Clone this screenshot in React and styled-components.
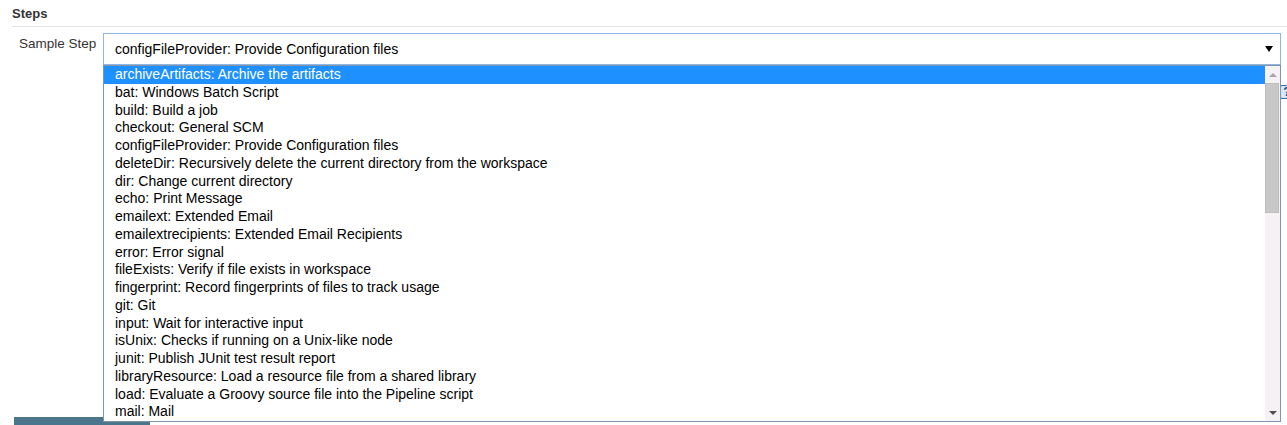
import styled, { createGlobalStyle } from "styled-components";

const GlobalStyle = createGlobalStyle`
  html, body {
    margin: 0;
    padding: 0;
    background: #fff;
    overflow: hidden;
  }
  body {
    font-family: "Liberation Sans", Arial, sans-serif;
    color: #333;
  }
`;

const STEPS = [
  "archiveArtifacts: Archive the artifacts",
  "bat: Windows Batch Script",
  "build: Build a job",
  "checkout: General SCM",
  "configFileProvider: Provide Configuration files",
  "deleteDir: Recursively delete the current directory from the workspace",
  "dir: Change current directory",
  "echo: Print Message",
  "emailext: Extended Email",
  "emailextrecipients: Extended Email Recipients",
  "error: Error signal",
  "fileExists: Verify if file exists in workspace",
  "fingerprint: Record fingerprints of files to track usage",
  "git: Git",
  "input: Wait for interactive input",
  "isUnix: Checks if running on a Unix-like node",
  "junit: Publish JUnit test result report",
  "libraryResource: Load a resource file from a shared library",
  "load: Evaluate a Groovy source file into the Pipeline script",
  "mail: Mail",
];

const Page = styled.div`
  width: 1287px;
  height: 425px;
  overflow: hidden;
  display: flex;
  flex-direction: column;
`;

const SectionHeader = styled.div`
  margin-left: 12px;
  padding: 6px 0 0 0;
  height: 20px;
  border-bottom: 1px solid #e3e3e3;
  font-size: 13px;
  font-weight: bold;
  line-height: 16px;
  color: #333;
`;

const FieldRow = styled.div`
  display: flex;
  margin-top: 6px;
  padding-right: 6px;
`;

const Label = styled.div`
  width: 84px;
  padding: 3px 0 0 19px;
  font-size: 13.5px;
  line-height: 16px;
  color: #333;
  white-space: nowrap;
`;

const SelectWrap = styled.div`
  position: relative;
  flex: 1;
`;

const SelectBox = styled.div`
  height: 30px;
  border: 1px solid #8fb5e3;
  display: flex;
  align-items: center;
  justify-content: space-between;
  padding: 0 6px 0 11px;
  font-size: 14px;
  color: #000;
`;

const Arrow = styled.span`
  width: 0;
  height: 0;
  border-left: 4px solid transparent;
  border-right: 4px solid transparent;
  border-top: 6px solid #000;
  margin-right: 1px;
`;

const Dropdown = styled.div`
  position: absolute;
  top: 32px;
  left: 0;
  right: 0;
  height: 355px;
  border: 1px solid #7f95ad;
  background: #fff;
  display: flex;
  z-index: 2;
`;

const OptionList = styled.ul`
  flex: 1;
  list-style: none;
  margin: 0;
  padding: 0;
  overflow: hidden;
`;

const Option = styled.li`
  height: 17.75px;
  line-height: 17.75px;
  padding-left: 11px;
  font-size: 14px;
  white-space: nowrap;
  color: ${(p) => (p.$active ? "#fff" : "#000")};
  background: ${(p) => (p.$active ? "#1e90ff" : "transparent")};
`;

const Scrollbar = styled.div`
  width: 15px;
  background: #f5f1f5;
  display: flex;
  flex-direction: column;
`;

const ScrollButton = styled.div`
  height: 17px;
  display: flex;
  align-items: center;
  justify-content: center;
`;

const UpTri = styled.span`
  width: 0;
  height: 0;
  border-left: 4px solid transparent;
  border-right: 4px solid transparent;
  border-bottom: 4px solid ${(p) => p.$color};
`;

const DownTri = styled.span`
  width: 0;
  height: 0;
  border-left: 4px solid transparent;
  border-right: 4px solid transparent;
  border-top: 4px solid ${(p) => p.$color};
`;

const Thumb = styled.div`
  height: 130px;
  margin: 0 1px 0 0;
  background: #c8c8c8;
  border: 1px solid #bdbdbd;
  box-sizing: border-box;
`;

const Track = styled.div`
  flex: 1;
`;

const HelpRow = styled.div`
  display: flex;
  justify-content: flex-end;
  margin-top: 20px;
  margin-right: -7px;
`;

const HelpIcon = styled.span`
  width: 14px;
  height: 14px;
  box-sizing: border-box;
  border: 1px solid #3c6aa5;
  border-radius: 2px;
  background: #d7e5f6;
  color: #1f4c8a;
  font-size: 12px;
  font-weight: bold;
  line-height: 12px;
  text-align: center;
`;

const Footer = styled.div`
  flex: 1;
  display: flex;
  align-items: flex-end;
  padding: 0 0 0 14px;
`;

const Button = styled.button`
  width: 136px;
  height: 8px;
  border: none;
  padding: 0;
  background: #4b758b;
`;

export default function App() {
  return (
    <>
      <GlobalStyle />
      <Page>
        <SectionHeader>Steps</SectionHeader>
        <FieldRow>
          <Label>Sample Step</Label>
          <SelectWrap>
            <SelectBox>
              <span>configFileProvider: Provide Configuration files</span>
              <Arrow />
            </SelectBox>
            <Dropdown>
              <OptionList>
                {STEPS.map((s, i) => (
                  <Option key={s} $active={i === 0}>
                    {s}
                  </Option>
                ))}
              </OptionList>
              <Scrollbar>
                <ScrollButton>
                  <UpTri $color="#a8a8a8" />
                </ScrollButton>
                <Thumb />
                <Track />
                <ScrollButton>
                  <DownTri $color="#505050" />
                </ScrollButton>
              </Scrollbar>
            </Dropdown>
          </SelectWrap>
        </FieldRow>
        <HelpRow>
          <HelpIcon>?</HelpIcon>
        </HelpRow>
        <Footer>
          <Button aria-label="Generate Pipeline Script" />
        </Footer>
      </Page>
    </>
  );
}
